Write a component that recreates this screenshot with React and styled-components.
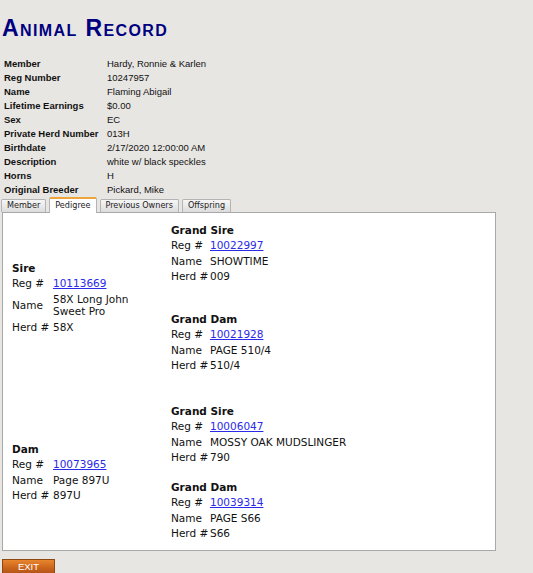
import React from 'react';
import styled, { createGlobalStyle } from 'styled-components';

const GlobalStyle = createGlobalStyle`
  body {
    margin: 0;
    background: #e8e6e3;
    font-family: "Liberation Sans", Arial, sans-serif;
  }
`;

const Page = styled.div`
  padding-top: 15px;
`;

const Title = styled.h1`
  margin: 0 0 16px 2px;
  font-size: 23px;
  line-height: 26px;
  font-weight: bold;
  font-variant: small-caps;
  letter-spacing: 1.4px;
  color: #000080;
`;

const InfoGrid = styled.div`
  display: grid;
  grid-template-columns: 103px auto;
  grid-auto-rows: 14px;
  padding-left: 4px;
  font-size: 9.5px;
  line-height: 14px;
  color: #111;
`;

const InfoLabel = styled.div`
  font-weight: bold;
`;

const InfoValue = styled.div``;

const TabBar = styled.div`
  position: relative;
  z-index: 1;
  display: flex;
  align-items: flex-end;
  gap: 3px;
  height: 14px;
  margin: 1px 0 0 1px;
`;

const Tab = styled.div`
  box-sizing: border-box;
  height: ${p => (p.$active ? 16 : 13)}px;
  margin-bottom: ${p => (p.$active ? -1 : 0)}px;
  padding: 0 5px;
  border: 1px solid #b4b4b4;
  border-top: ${p => (p.$active ? '2px solid #f0a53c' : '1px solid #b4b4b4')};
  border-bottom: none;
  border-radius: 2px 2px 0 0;
  background: ${p => (p.$active ? '#fff' : 'linear-gradient(#f6f6f6, #dcdcdc)')};
  font-family: "DejaVu Sans Condensed", "DejaVu Sans", sans-serif;
  font-size: 9px;
  line-height: ${p => (p.$active ? 12 : 11)}px;
  color: #222;
  cursor: pointer;
`;

const Panel = styled.div`
  box-sizing: border-box;
  width: 494px;
  margin-left: 2px;
  padding: 9px 0 9px 9px;
  background: #fff;
  border: 1px solid #a8a8a8;
  font-family: "DejaVu Sans", Verdana, sans-serif;
  font-size: 10.5px;
  color: #111;
`;

const Section = styled.div`
  display: flex;
  align-items: center;
  margin-top: ${p => p.$offset || 0}px;
`;

const ParentCol = styled.div`
  width: 159px;
  flex: none;
`;

const GrandCol = styled.div`
  display: flex;
  flex-direction: column;
  gap: ${p => p.$gap}px;
`;

const Block = styled.div`
  display: grid;
  grid-template-columns: ${p => p.$labelWidth}px ${p => p.$valueWidth || 'auto'};
  line-height: 12.5px;
`;

const Heading = styled.div`
  grid-column: 1 / span 2;
  padding: 1.5px 0;
  font-weight: bold;
`;

const Cell = styled.div`
  display: flex;
  align-items: center;
  padding: 1.5px 0;
`;

const RegLink = styled.a`
  color: #2a2ae8;
  text-decoration: underline;
`;

const ExitButton = styled.button`
  display: block;
  box-sizing: border-box;
  width: 53px;
  height: 16px;
  margin: 8px 0 0 2px;
  padding: 0;
  border: 1px solid #8e4612;
  background: linear-gradient(#e8862e, #c8621a 60%, #b0541a);
  color: #fff;
  font-family: "Liberation Sans", Arial, sans-serif;
  font-size: 9.5px;
  line-height: 14px;
  cursor: pointer;
`;

const info = [
  ['Member', 'Hardy, Ronnie & Karlen'],
  ['Reg Number', '10247957'],
  ['Name', 'Flaming Abigail'],
  ['Lifetime Earnings', '$0.00'],
  ['Sex', 'EC'],
  ['Private Herd Number', '013H'],
  ['Birthdate', '2/17/2020 12:00:00 AM'],
  ['Description', 'white w/ black speckles'],
  ['Horns', 'H'],
  ['Original Breeder', 'Pickard, Mike'],
];

const tabs = ['Member', 'Pedigree', 'Previous Owners', 'Offspring'];

const pedigree = [
  {
    parent: { title: 'Sire', reg: '10113669', name: '58X Long John Sweet Pro', herd: '58X' },
    grands: [
      { title: 'Grand Sire', reg: '10022997', name: 'SHOWTIME', herd: '009' },
      { title: 'Grand Dam', reg: '10021928', name: 'PAGE 510/4', herd: '510/4' },
    ],
    gap: 27,
    offset: 0,
  },
  {
    parent: { title: 'Dam', reg: '10073965', name: 'Page 897U', herd: '897U' },
    grands: [
      { title: 'Grand Sire', reg: '10006047', name: 'MOSSY OAK MUDSLINGER', herd: '790' },
      { title: 'Grand Dam', reg: '10039314', name: 'PAGE S66', herd: 'S66' },
    ],
    gap: 14,
    offset: 30,
  },
];

const Animal = ({ data, labelWidth, valueWidth }) => (
  <Block $labelWidth={labelWidth} $valueWidth={valueWidth}>
    <Heading>{data.title}</Heading>
    <Cell>Reg #</Cell>
    <Cell>
      <RegLink href="#">{data.reg}</RegLink>
    </Cell>
    <Cell>Name</Cell>
    <Cell>{data.name}</Cell>
    <Cell>Herd #</Cell>
    <Cell>{data.herd}</Cell>
  </Block>
);

const App = () => {
  return (
    <Page>
      <GlobalStyle />
      <Title>Animal Record</Title>
      <InfoGrid>
        {info.map(([label, value]) => (
          <React.Fragment key={label}>
            <InfoLabel>{label}</InfoLabel>
            <InfoValue>{value}</InfoValue>
          </React.Fragment>
        ))}
      </InfoGrid>
      <TabBar>
        {tabs.map(t => (
          <Tab key={t} $active={t === 'Pedigree'}>{t}</Tab>
        ))}
      </TabBar>
      <Panel>
        {pedigree.map(sec => (
          <Section key={sec.parent.title} $offset={sec.offset}>
            <ParentCol>
              <Animal data={sec.parent} labelWidth={41} valueWidth="104px" />
            </ParentCol>
            <GrandCol $gap={sec.gap}>
              {sec.grands.map(g => (
                <Animal key={g.reg} data={g} labelWidth={39} />
              ))}
            </GrandCol>
          </Section>
        ))}
      </Panel>
      <ExitButton>EXIT</ExitButton>
    </Page>
  );
};

export default App;
